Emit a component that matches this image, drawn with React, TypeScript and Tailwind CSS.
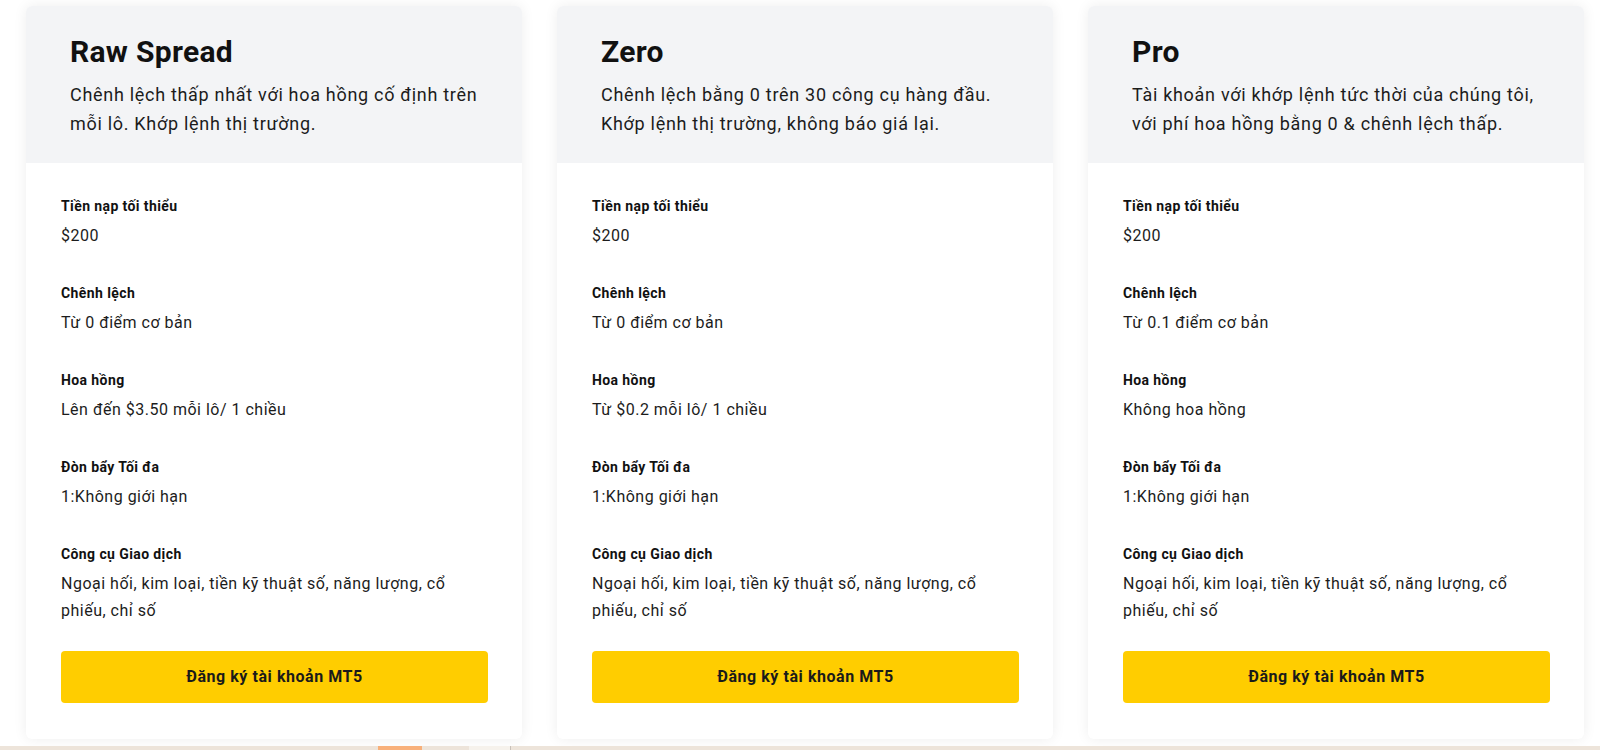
import React from "react";

type Row = { label: string; value: string };
type Plan = { title: string; desc: string; rows: Row[] };

const plans: Plan[] = [
  {
    title: "Raw Spread",
    desc: "Chênh lệch thấp nhất với hoa hồng cố định trên mỗi lô. Khớp lệnh thị trường.",
    rows: [
      { label: "Tiền nạp tối thiểu", value: "$200" },
      { label: "Chênh lệch", value: "Từ 0 điểm cơ bản" },
      { label: "Hoa hồng", value: "Lên đến $3.50 mỗi lô/ 1 chiều" },
      { label: "Đòn bẩy Tối đa", value: "1:Không giới hạn" },
      { label: "Công cụ Giao dịch", value: "Ngoại hối, kim loại, tiền kỹ thuật số, năng lượng, cổ phiếu, chỉ số" },
    ],
  },
  {
    title: "Zero",
    desc: "Chênh lệch bằng 0 trên 30 công cụ hàng đầu. Khớp lệnh thị trường, không báo giá lại.",
    rows: [
      { label: "Tiền nạp tối thiểu", value: "$200" },
      { label: "Chênh lệch", value: "Từ 0 điểm cơ bản" },
      { label: "Hoa hồng", value: "Từ $0.2 mỗi lô/ 1 chiều" },
      { label: "Đòn bẩy Tối đa", value: "1:Không giới hạn" },
      { label: "Công cụ Giao dịch", value: "Ngoại hối, kim loại, tiền kỹ thuật số, năng lượng, cổ phiếu, chỉ số" },
    ],
  },
  {
    title: "Pro",
    desc: "Tài khoản với khớp lệnh tức thời của chúng tôi, với phí hoa hồng bằng 0 & chênh lệch thấp.",
    rows: [
      { label: "Tiền nạp tối thiểu", value: "$200" },
      { label: "Chênh lệch", value: "Từ 0.1 điểm cơ bản" },
      { label: "Hoa hồng", value: "Không hoa hồng" },
      { label: "Đòn bẩy Tối đa", value: "1:Không giới hạn" },
      { label: "Công cụ Giao dịch", value: "Ngoại hối, kim loại, tiền kỹ thuật số, năng lượng, cổ phiếu, chỉ số" },
    ],
  },
];

function Card({ plan }: { plan: Plan }) {
  return (
    <div className="w-[496px] flex flex-col bg-white rounded-[6px] overflow-hidden shadow-[0_0_14px_rgba(0,0,0,0.07)]">
      <div className="bg-[#f3f4f6] pl-[44px] pr-[26px] pt-[28px] pb-[24px]">
        <h2 className="text-[30px] leading-[36px] font-bold tracking-[0.3px] text-[#111111]">{plan.title}</h2>
        <p className="mt-[11px] text-[18px] leading-[28.8px] tracking-[0.7px] text-[#1c1c1c]">{plan.desc}</p>
      </div>
      <div className="pl-[35px] pr-[34px] pt-[33px] pb-[36px] flex flex-col">
        {plan.rows.map((r, i) => (
          <div key={i} className={i < plan.rows.length - 1 ? "mb-[34px]" : ""}>
            <div className="text-[14px] leading-[20px] font-bold tracking-[0.4px] text-[#111111]">{r.label}</div>
            <div className="mt-[6px] text-[16px] leading-[27px] tracking-[0.5px] text-[#1c1c1c]">{r.value}</div>
          </div>
        ))}
        <button className="mt-[27px] h-[52px] w-full rounded-[4px] bg-[#ffcd00] text-[16px] font-bold tracking-[0.55px] text-[#1a1a1a]">
          Đăng ký tài khoản MT5
        </button>
      </div>
    </div>
  );
}

export default function App() {
  return (
    <div
      className="w-full h-[750px] bg-white flex flex-col overflow-hidden"
      style={{ fontFamily: "Roboto, 'Noto Sans', sans-serif" }}
    >
      <div className="flex gap-[35px] pl-[26px] pt-[6px]">
        {plans.map((p) => (
          <Card key={p.title} plan={p} />
        ))}
      </div>
      <div className="mt-auto h-[4px] flex bg-[#ede4da]">
        <div className="w-[378px]" />
        <div className="w-[44px] bg-[#f8b07a]" />
        <div className="w-[47px]" />
        <div className="w-[41px] bg-[#f6f2ec]" />
        <div className="w-[1px] bg-[#c9c1b9]" />
      </div>
    </div>
  );
}
